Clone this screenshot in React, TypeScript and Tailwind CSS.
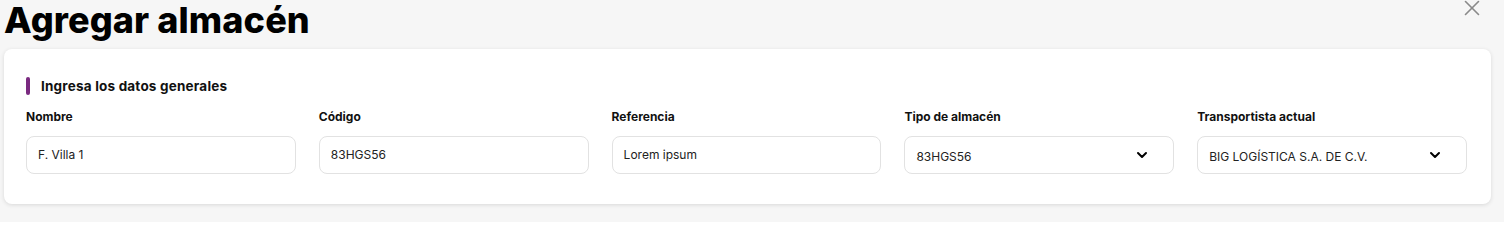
import { ChevronDown, X } from 'lucide-react'

const fields = [
  { label: 'Nombre', value: 'F. Villa 1', select: false },
  { label: 'Código', value: '83HGS56', select: false },
  { label: 'Referencia', value: 'Lorem ipsum', select: false },
  { label: 'Tipo de almacén', value: '83HGS56', select: true },
  { label: 'Transportista actual', value: 'BIG LOGÍSTICA S.A. DE C.V.', select: true },
]

export default function App() {
  return (
    <main className="h-[222px] bg-[#f6f6f6] px-1 font-['Inter',sans-serif] text-[#111]">
      {/* Header */}
      <div className="flex items-start justify-between">
        <h1 className="text-[36px] font-extrabold leading-[40px] tracking-[0.1px] text-black">
          Agregar almacén
        </h1>
        <button className="mr-[15px] -mt-[5px] text-[#8a8a8a]">
          <X className="h-[26px] w-[26px]" strokeWidth={1.5} />
        </button>
      </div>

      {/* Card */}
      <section className="mt-[9px] w-[1487px] rounded-lg bg-white pb-[30px] pl-[22px] pr-[24px] pt-[28px] shadow-[0_1px_4px_rgba(0,0,0,0.12)]">
        <div className="flex h-[18px] items-center gap-[11px]">
          <span className="h-[18px] w-[4px] rounded-full bg-[#7a2a80]" />
          <h2 className="text-[13.5px] font-bold tracking-[0.2px]">Ingresa los datos generales</h2>
        </div>

        <div className="mt-[14px] grid grid-cols-5 gap-x-[23px]">
          {fields.map(f => (
            <div key={f.label}>
              <label className="block text-[12px] font-bold leading-4">{f.label}</label>
              <div className="mt-[11px] flex h-[38px] items-center justify-between rounded-lg border border-[#e2e2e2] pl-[11px] pr-[23px] text-[12px] text-[#222]">
                <span className={f.select ? 'pt-[3px]' : ''}>{f.value}</span>
                {f.select && <ChevronDown className="h-4 w-4 text-black" strokeWidth={3} />}
              </div>
            </div>
          ))}
        </div>
      </section>
    </main>
  )
}
